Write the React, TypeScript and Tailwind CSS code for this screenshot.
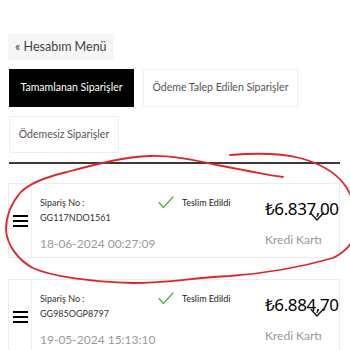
import React from 'react';

type Order = {
  no: string;
  date: string;
  status: string;
  price: string;
  method: string;
};

const ORDERS: Order[] = [
  { no: 'GG117NDO1561', date: '18-06-2024 00:27:09', status: 'Teslim Edildi', price: '₺6.837,00', method: 'Kredi Kartı' },
  { no: 'GG985OGP8797', date: '19-05-2024 15:13:10', status: 'Teslim Edildi', price: '₺6.884,70', method: 'Kredi Kartı' },
];

const CheckIcon = () => (
  <svg width="16" height="13" viewBox="0 0 16 13" fill="none" stroke="#4caf50" strokeWidth="1.3" strokeLinecap="round" strokeLinejoin="round">
    <path d="M1 6.5 L5.5 11.5 L15 1" />
  </svg>
);

const Chevron = () => (
  <svg width="15" height="9" viewBox="0 0 15 9" fill="none" stroke="#111" strokeWidth="1.3" strokeLinecap="round" strokeLinejoin="round">
    <path d="M1 1.5 L7 8 L13.5 1" />
  </svg>
);

const OrderCard = ({ order }: { order: Order }) => (
  <div className="flex h-[75px] border border-[#ececec] bg-white">
    <div className="w-[23px] flex items-center justify-center border-r border-[#f0f0f0] shrink-0">
      <div className="flex flex-col gap-[2.5px] pt-[1px]">
        <div className="w-[15px] h-[2.5px] bg-black" />
        <div className="w-[15px] h-[2.5px] bg-black" />
        <div className="w-[15px] h-[2.5px] bg-black" />
      </div>
    </div>
    <div className="flex flex-1 pl-[8px] pt-[13px]">
      <div className="w-[118px] flex flex-col">
        <div className="text-[9px] leading-[12px] text-[#333]">Sipariş No :</div>
        <div className="text-[9px] leading-[12px] text-[#333] mt-[3px]">{order.no}</div>
        <div className="text-[12px] leading-[14px] text-[#9a9a9a] mt-[13px]">{order.date}</div>
      </div>
      <div className="w-[107px] flex items-start gap-[8px]">
        <div className="-mt-[1px]"><CheckIcon /></div>
        <span className="text-[9px] leading-[12px] text-[#222]">{order.status}</span>
      </div>
      <div className="flex flex-col">
        <div className="relative font-['Noto_Sans',sans-serif] text-[17px] leading-[20px] tracking-[-0.4px] text-black mt-[2px]">
          {order.price}
          <div className="absolute left-[45px] top-[13px]"><Chevron /></div>
        </div>
        <div className="text-[12px] leading-[14px] text-[#9a9a9a] mt-[14px]">{order.method}</div>
      </div>
    </div>
  </div>
);

const Annotation = () => (
  <svg className="absolute left-0 top-0 pointer-events-none" width="350" height="350" viewBox="0 0 350 350" fill="none">
    <path
      d="M283 177 C260 174 235 168 217 165 C195 160 170 155 150 156 C125 157 100 163 67 172 C50 176 30 182 20 193 C10 205 6 218 6 230 C7 245 18 260 33 268 C50 276 90 282 133 283 C170 283 190 278 230 276 C270 273 305 266 333 258 C347 251 356 240 357 225 C357 210 352 195 344 184 C335 172 318 163 300 158 C280 153 255 153 230 155"
      stroke="#e0242b"
      strokeWidth="1.8"
      strokeLinecap="round"
      strokeLinejoin="round"
    />
  </svg>
);

export default function App() {
  return (
    <div className="relative w-[350px] h-[350px] overflow-hidden bg-white font-['Lato',sans-serif]">
      <div className="pt-[34px] pl-[8px] pr-[10px]">
        <button className="h-[26px] px-[7px] bg-[#f6f6f6] text-[12.5px] text-[#444] flex items-center">
          « Hesabım Menü
        </button>
        <div className="flex gap-[9px] mt-[9px] pl-[1px]">
          <button className="h-[38px] w-[125px] bg-black text-white text-[10.5px] flex items-center justify-center">
            Tamamlanan Siparişler
          </button>
          <button className="h-[38px] w-[155px] bg-white border border-[#eeeeee] rounded-[2px] text-[10.5px] text-[#555] flex items-center justify-center">
            Ödeme Talep Edilen Siparişler
          </button>
        </div>
        <button className="mt-[9px] ml-[1px] h-[37px] w-[110px] bg-white border border-[#eeeeee] rounded-[2px] text-[10.5px] text-[#555] flex items-center justify-center">
          Ödemesiz Siparişler
        </button>
        <div className="mt-[9px] ml-[1px] h-[2px] bg-[#3a3a3a]" />
        <div className="mt-[19px] flex flex-col gap-[21px]">
          {ORDERS.map(o => (
            <OrderCard key={o.no} order={o} />
          ))}
        </div>
      </div>
      <Annotation />
    </div>
  );
}
